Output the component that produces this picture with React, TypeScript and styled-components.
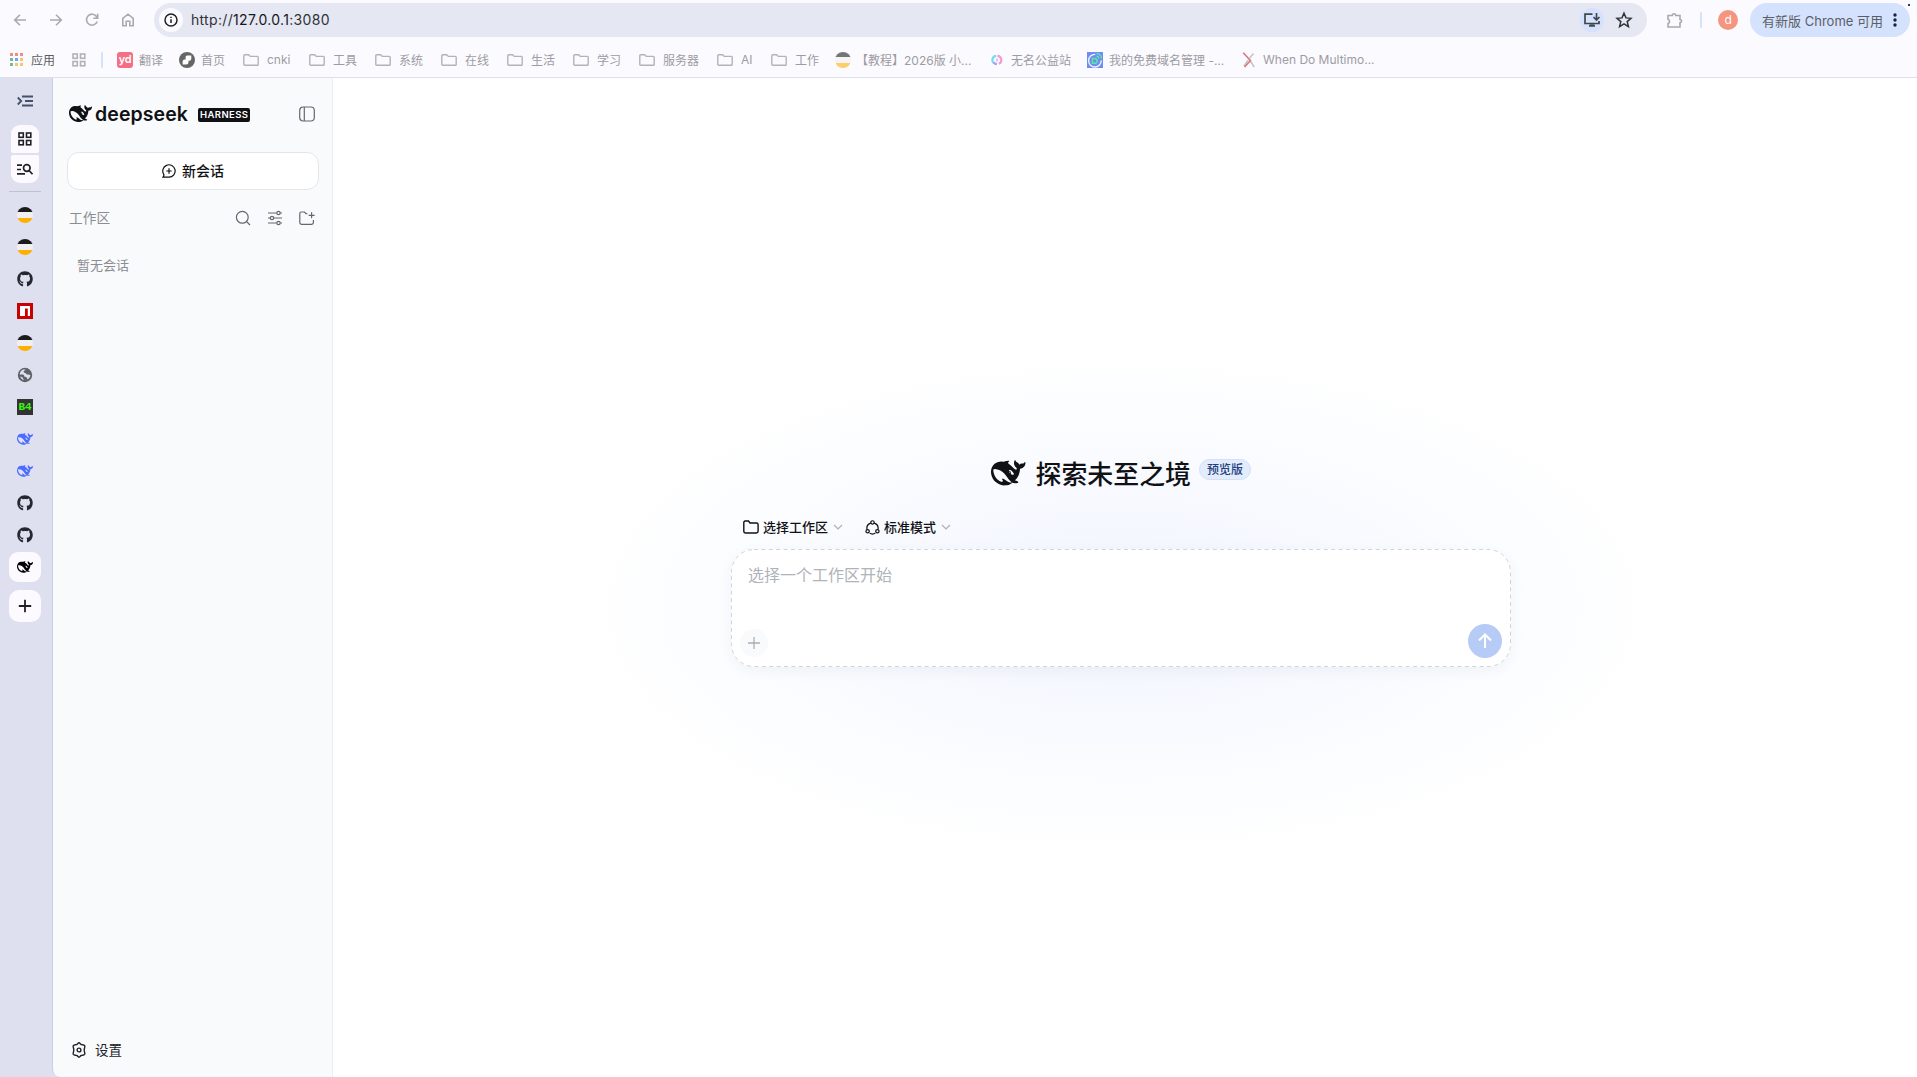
import React from "react";
import styled, { createGlobalStyle } from "styled-components";
import { FaGithub } from "react-icons/fa";

const Global = createGlobalStyle`
  * { box-sizing: border-box; }
  html, body { margin: 0; padding: 0; }
  body {
    width: 1917px; height: 1077px; overflow: hidden; background: #fff;
    font-family: Inter, "Noto Sans CJK SC", sans-serif;
    -webkit-font-smoothing: antialiased;
  }
  svg { display: block; flex: none; }
`;

const Window = styled.div`
  display: flex; flex-direction: column; width: 1917px; height: 1077px; background: #fbfaff;
`;
const Toolbar = styled.header`
  display: flex; align-items: center; height: 40px; padding: 0 7px 0 10px; color: #a9a9af; position: relative;
`;
const NavButton = styled.span<{ $w: number }>`
  display: flex; align-items: center; justify-content: center; width: ${p => p.$w}px; height: 34px;
`;
const AddressBar = styled.div`
  display: flex; align-items: center; width: 1494px; height: 34px; padding: 0 14px 0 5px;
  border-radius: 17px; background: #e5e7f3; color: #303238; font-size: 14px;
`;
const SiteInfo = styled.span`
  display: flex; align-items: center; justify-content: center; width: 24px; height: 24px;
  margin-right: 8px; border-radius: 50%; background: #fbfaff; color: #1f2126;
`;
const Url = styled.span`
  flex: none; padding-bottom: 1px; letter-spacing: 0.33px; white-space: nowrap;
  b { font-weight: 400; color: #17181c; }
`;
const Spacer = styled.span`flex: 1;`;
const InstallButton = styled.span`
  display: flex; align-items: center; justify-content: center; width: 24px; height: 24px;
  border-radius: 50%; background: #d5e2fd; color: #42454c; margin-right: 11px;
`;
const Divider = styled.i<{ $m: string }>`
  width: 2px; height: 16px; margin: ${p => p.$m}; background: #d5e2fd; border-radius: 1px;
`;
const Avatar = styled.span`
  width: 20px; height: 20px; margin-right: 12px; border-radius: 50%; background: #f5957f;
  color: #fff; font-size: 12px; line-height: 20px; text-align: center;
`;
const UpdatePill = styled.span`
  display: flex; align-items: center; width: 160px; height: 34px; padding-left: 12px; border-radius: 17px;
  background: #d5e2fd; color: #5b5e66; font-size: 13px; white-space: nowrap;
  svg { margin-left: 9px; color: #15253f; }
`;
const CornerDot = styled.i`
  position: absolute; right: 7px; top: 4px; width: 2px; height: 2px; background: #3d2a80;
`;
const Bookmarks = styled.nav`
  height: 38px; border-bottom: 1px solid #dedfea; padding: 2px 0 0 10px;
  display: flex; align-items: center; flex: none; color: #9d9ca2;
`;
const Bookmark = styled.span<{ $w: number; $gap?: number; $c?: string }>`
  display: flex; align-items: center; flex: none; width: ${p => p.$w}px; gap: ${p => p.$gap ?? 7}px;
  font-size: 12px; white-space: nowrap; color: ${p => p.$c ?? "#9d9ca2"};
`;
const YdIcon = styled.span`
  width: 16px; height: 16px; border-radius: 3px; background: #f66e84; color: #fff; flex: none;
  font-size: 11px; font-weight: 600; line-height: 14px; text-align: center; letter-spacing: -.3px;
`;
const Bee = styled.i<{ $dim?: boolean }>`
  width: 16px; height: 16px; border-radius: 50%; flex: none; opacity: ${p => (p.$dim ? 0.6 : 1)};
  background: linear-gradient(#1b1b1e 0 4.6px, #f0f0f0 4.6px 11px, #ffb003 11px);
`;
const Body = styled.div`
  display: flex; flex: 1; min-height: 0; background: #dee0f0;
`;
const TabStrip = styled.aside`
  width: 52px; flex: none; display: flex; flex-direction: column; align-items: center; padding-right: 2px;
  background: #dee0f0; color: #1f2126;
`;
const StripToggle = styled.span`
  display: flex; align-items: center; height: 18px; margin-top: 14px; color: #45506b;
`;
const StripButton = styled.span<{ $pos: "top" | "bottom" }>`
  display: flex; align-items: center; justify-content: center; width: 28px; height: 28px; background: #fcfaff;
  margin-top: ${p => (p.$pos === "top" ? 15 : 2)}px;
  border-radius: ${p => (p.$pos === "top" ? "9px 9px 2px 2px" : "2px 2px 9px 9px")};
`;
const StripRule = styled.i`
  width: 32px; height: 1px; margin: 8px 0; background: #bfc1d0;
`;
const Tab = styled.span<{ $active?: boolean }>`
  display: flex; align-items: center; justify-content: center; width: 32px; height: 30px; margin-bottom: 2px;
  border-radius: 9px; background: ${p => (p.$active ? "#fcfaff" : "transparent")};
`;
const NewTab = styled.span`
  display: flex; align-items: center; justify-content: center; width: 32px; height: 32px; margin-top: 6px;
  border-radius: 10px; background: #fcfaff;
`;
const B4 = styled.span`
  width: 16px; height: 16px; background: #333; color: #3df50f; text-align: center;
  font: bold 11px/17px "Liberation Mono", monospace;
`;
const Sidebar = styled.section`
  width: 281px; flex: none; display: flex; flex-direction: column; padding: 0 13px 0 14px;
  background: #f9fafc; border-left: 1px solid #cccfe0; border-right: 1px solid #eceef0; border-bottom-left-radius: 8px;
`;
const Brand = styled.div`
  display: flex; align-items: center; height: 28px; margin-top: 22px; padding: 0 4px 0 2px; color: #101114;
`;
const Wordmark = styled.span`
  width: 97px; margin: -1px 6px 0 3px; font: 600 19.5px/28px Inter, sans-serif; letter-spacing: .1px;
`;
const Harness = styled.span`
  width: 52px; height: 14px; margin-top: 1px; border-radius: 2px; background: #101114; color: #fff; text-align: center;
  font: 600 9.5px/14px Inter, sans-serif; letter-spacing: .4px; padding-left: .4px;
`;
const NewSession = styled.button`
  display: flex; align-items: center; justify-content: center; gap: 6px; height: 38px; margin: 24px 0 0; padding: 0;
  border: 1px solid #e5e6e9; border-radius: 12px; background: #fff; color: #101114;
  font: 500 14px/20px Inter, "Noto Sans CJK SC", sans-serif;
`;
const SectionHead = styled.div`
  display: flex; align-items: center; height: 20px; margin-top: 18px; padding: 0 4px 0 2px; gap: 16px;
  color: #8b8d93; font-size: 13.7px;
  svg { color: #64676e; }
`;
const Label = styled.span`padding-bottom: 2px;`;
const Empty = styled.p`
  margin: 27px 0 0 10px; color: #8b8d93; font-size: 13px; line-height: 20px;
`;
const Settings = styled.div`
  display: flex; align-items: center; gap: 8px; height: 20px; margin: auto 0 17px 4px; color: #202227; font-size: 13.5px;
`;
const Main = styled.main`
  display: flex; flex-direction: column; align-items: center; flex: 1; padding: 373px 8px 0 0;
  background: radial-gradient(ellipse 560px 260px at 788px 527px, #f2f6ff 0%, #f4f7fe 25%, #f8faff 50%, #fcfdff 75%, #fff 100%) #fff;
`;
const Hero = styled.div`
  display: flex; align-items: center; height: 44px; color: #101114;
`;
const Title = styled.h1`
  margin: 0 8px 0 10px; font: 500 25.9px/42px "Noto Sans CJK SC", sans-serif; padding-bottom: 1px;
`;
const Preview = styled.span`
  height: 21px; width: 52px; margin-bottom: 7px; border: 1px solid #d3e0f8; border-radius: 11px; background: #e3ecfc;
  color: #243f7d; font: 500 12px/18px "Noto Sans CJK SC", sans-serif; text-align: center;
`;
const Composer = styled.div`
  display: flex; flex-direction: column; width: 780px;
`;
const Selectors = styled.div`
  display: flex; height: 32px; padding-left: 12px; gap: 22px; margin: 16px 0 6px;
`;
const Selector = styled.span`
  display: flex; align-items: center; gap: 4px; color: #101114; font-size: 13px; font-weight: 500;
  svg:last-child { color: #aeb0b5; margin-left: 1px; }
`;
const InputBox = styled.div`
  position: relative; display: flex; flex-direction: column; justify-content: space-between; height: 118px;
  padding: 15px 9px 9px 10px; border-radius: 23px; background: #fff;
  box-shadow: 0 4px 14px rgba(40, 50, 80, .05);
`;
const DashedEdge = styled.svg`
  position: absolute; inset: 0; width: 100%; height: 100%; pointer-events: none;
`;
const Placeholder = styled.span`
  padding-left: 7px; color: #b0b3ba; font-size: 16px; line-height: 22px;
`;
const InputActions = styled.div`
  display: flex; justify-content: space-between; align-items: center;
`;
const Attach = styled.span`
  display: flex; align-items: center; justify-content: center; width: 28px; height: 28px; margin-top: 4px; margin-left: -1px;
  border-radius: 50%; background: #f9fafb; color: #adafb3;
`;
const Send = styled.span`
  display: flex; align-items: center; justify-content: center; width: 34px; height: 34px;
  border-radius: 50%; background: #b7cbf7; color: #fff;
`;

const Icon = ({ s = 16, w = 1.3, children, box = 16 }: { s?: number; w?: number; box?: number; children: React.ReactNode }) => (
  <svg width={s} height={s} viewBox={`0 0 ${box} ${box}`} fill="none" stroke="currentColor" strokeWidth={w}>{children}</svg>
);

const Whale = ({ s, c = "currentColor" }: { s: number; c?: string }) => (
  <svg width={s} height={s * 0.75} viewBox="0 3 24 18" fill={c}>
    <path d="M23.748 4.482c-.254-.124-.364.113-.512.234-.051.039-.094.09-.137.136-.372.397-.806.657-1.373.626-.829-.046-1.537.214-2.163.848-.133-.782-.575-1.248-1.247-1.548-.352-.156-.708-.311-.955-.65-.172-.241-.219-.51-.305-.774-.055-.16-.11-.323-.293-.35-.2-.031-.278.136-.356.276-.313.572-.434 1.202-.422 1.84.027 1.436.633 2.58 1.838 3.393.137.093.172.187.129.323-.082.28-.18.552-.266.833-.055.179-.137.217-.329.14a5.526 5.526 0 01-1.736-1.18c-.857-.828-1.631-1.742-2.597-2.458a11.365 11.365 0 00-.689-.471c-.985-.957.13-1.743.388-1.836.27-.098.093-.432-.779-.428-.872.004-1.67.295-2.687.684a3.055 3.055 0 01-.465.137 9.597 9.597 0 00-2.883-.102c-1.885.21-3.39 1.102-4.497 2.623C.082 8.606-.231 10.684.152 12.85c.403 2.284 1.569 4.175 3.36 5.653 1.858 1.533 3.997 2.284 6.438 2.14 1.482-.085 3.133-.284 4.994-1.86.47.234.962.327 1.78.397.63.059 1.236-.03 1.705-.128.735-.156.684-.837.419-.961-2.155-1.004-1.682-.595-2.113-.926 1.096-1.296 2.746-2.642 3.392-7.003.05-.347.007-.565 0-.845-.004-.17.035-.237.23-.256a4.173 4.173 0 001.545-.475c1.396-.763 1.96-2.015 2.093-3.517.02-.23-.004-.467-.247-.588zM11.581 18c-2.089-1.642-3.102-2.183-3.52-2.16-.392.024-.321.471-.235.763.09.288.207.486.371.739.114.167.192.416-.113.603-.673.416-1.842-.14-1.897-.167-1.361-.802-2.5-1.86-3.301-3.307-.774-1.393-1.224-2.887-1.298-4.482-.02-.386.093-.522.477-.592a4.696 4.696 0 011.529-.039c2.132.312 3.946 1.265 5.468 2.774.868.86 1.525 1.887 2.202 2.891.72 1.066 1.494 2.082 2.48 2.914.348.292.625.514.891.677-.802.09-2.14.11-3.054-.614zm1-6.44a.306.306 0 01.415-.287.302.302 0 01.2.288.306.306 0 01-.31.307.303.303 0 01-.304-.308zm3.11 1.596c-.2.081-.399.151-.59.16a1.245 1.245 0 01-.798-.254c-.274-.23-.47-.358-.552-.758a1.73 1.73 0 01.016-.588c.07-.327-.008-.537-.239-.727-.187-.156-.426-.199-.688-.199a.559.559 0 01-.254-.078c-.11-.054-.2-.19-.114-.358.028-.054.16-.186.192-.21.356-.202.767-.136 1.146.016.352.144.618.408 1.001.782.391.451.462.576.685.914.176.265.336.537.445.848.067.195-.019.354-.25.452z" />
  </svg>
);

const FolderOutline = () => (
  <svg width="16" height="12" viewBox="0 0 16 12" fill="none" stroke="#b3b2b8" strokeWidth="1.4">
    <path d="M.8 1.6a.9.9 0 0 1 .9-.9h4l1.6 1.7h7a.9.9 0 0 1 .9.9v7.1a.9.9 0 0 1-.9.9H1.7a.9.9 0 0 1-.9-.9z" />
  </svg>
);
const GridFour = ({ s = 14, w = 1.6 }: { s?: number; w?: number }) => (
  <Icon s={s} box={14} w={w}>
    {[[1, 1], [8.5, 1], [1, 8.5], [8.5, 8.5]].map(([x, y]) => <rect key={`${x}${y}`} x={x} y={y} width="4.3" height="4.3" />)}
  </Icon>
);
const AppsDots = () => (
  <svg width="13" height="13" viewBox="0 0 13 13">
    {["#f28b82", "#f28b82", "#f28b82", "#74bd8d", "#6aa7f5", "#f7c56b", "#74bd8d", "#f7c56b", "#f7c56b"].map((c, i) => (
      <rect key={i} x={(i % 3) * 5} y={Math.floor(i / 3) * 5} width="3" height="3" fill={c} />
    ))}
  </svg>
);
const HomeMark = () => (
  <svg width="16" height="16" viewBox="0 0 16 16">
    <circle cx="8" cy="8" r="8" fill="#666" />
    <path d="M8.2 3.5h4.1v3.2a2 2 0 0 1-2 2h-.8v1.6a2.3 2.3 0 0 1-2.3 2.3H3.6V9.5a2 2 0 0 1 2-2h1V5.1a1.6 1.6 0 0 1 1.6-1.6z" fill="#fff" />
  </svg>
);
const SwirlMark = () => (
  <svg width="16" height="16" viewBox="0 0 16 16" fill="none" strokeWidth="2.2">
    <path d="M7.2 3.9A4.1 4.1 0 0 0 4.7 11" stroke="#7bd9ee" />
    <path d="M4.7 10.500a4.100 4.100 0 0 0 3.200 1.600" stroke="#a99bf8" />
    <path d="M8.4 3.900a4.100 4.100 0 0 1 1.300 7.900" stroke="#f79bce" />
    <path d="M8 6.500v3" stroke="#c0a3f5" strokeWidth="1.2" />
  </svg>
);
const DomainMark = () => (
  <svg width="16" height="16" viewBox="0 0 16 16" fill="none">
    <path d="M0 0h16v16H0z" fill="#6f8cf0" />
    <path d="M8.2 2.4a6.3 6.3 0 1 0 6 6" stroke="#edf2ff" strokeWidth="1.4" />
    <path d="M5.5 6.5h2.2a2.4 2.4 0 0 1 0 4.8H5.5z" stroke="#5be6a4" strokeWidth="1.5" />
    <path d="M9.500 1.300a6 6 0 0 1 5.200 5.200M9.500 4a3.600 3.600 0 0 1 2.700 2.700" stroke="#63e3a8" strokeWidth="1.3" />
  </svg>
);
const ArxivMark = () => (
  <svg width="16" height="16" viewBox="0 0 16 16" fill="none">
    <path d="M12.5 1.5 8.7 6M7 8.2 3 14M8 7l5.300 8" stroke="#c6c2c2" strokeWidth="1.5" />
    <path d="m2.2.8 7.200 7.700L3.600 15" stroke="#db7680" strokeWidth="1.6" />
  </svg>
);
const Globe = () => (
  <svg width="16" height="16" viewBox="0 0 16 16">
    <circle cx="8" cy="8" r="7.2" fill="#5f6368" />
    <path d="M8.6 2.6c-.4 1.2-2 .8-2 2.1 0 1.2 1.8.8 2.2 1.6.5 1 1.2 1.4 2.3 1.2.8-.2 1.6.2 2.3.4-.2 2-1.2 3.6-3 4.6-.2-1.1-.2-2-1.2-2.3-.9-.3-1.9-.1-2-1.2-.2-1-.7-1.5-1.7-1.5H2.7c0-2.4 1.4-4.4 3.5-5.1z" fill="#dee0f0" />
    <path d="M3.2 9.4c1.2.5 2.4.5 2.7 1.6.2.8.3 1.5 1.3 1.9-1.8.1-3.4-1.5-4-3.500z" fill="#dee0f0" />
  </svg>
);
const Npm = () => (
  <svg width="16" height="16" viewBox="0 0 16 16">
    <path d="M0 0h16v16H0z" fill="#cb0000" /><path d="M3 3h10v10h-2.200V5.500H8V13H3z" fill="#fff" />
  </svg>
);
const Chevron = () => <Icon s={10} box={10} w={1.200}><path d="m1 3 4 4 4-4" /></Icon>;

const folders: [string, number][] = [["cnki", 66], ["工具", 66], ["系统", 66], ["在线", 66], ["生活", 66], ["学习", 66], ["服务器", 78], ["AI", 54], ["工作", 64]];

export default function App() {
  return (
    <Window>
      <Global />
      <Toolbar>
        <NavButton $w={20}><Icon w={1.6}><path d="M14 8H3M8 2.700 2.700 8 8 13.300" /></Icon></NavButton>
        <NavButton $w={52}><Icon w={1.6}><path d="M2 8h11M8 2.700 13.300 8 8 13.300" /></Icon></NavButton>
        <NavButton $w={20}><Icon w={1.6}><path d="M13.200 9.500a5.500 5.500 0 1 1-.7-5L13.600 6M13.700 1.800V6.300H9.300" /></Icon></NavButton>
        <NavButton $w={52}><Icon w={1.6}><path d="M2.800 6.300 8 2.200l5.200 4.100v7.500H9.800V9.300H6.200v4.500H2.800z" /></Icon></NavButton>
        <AddressBar>
          <SiteInfo><Icon w={1.5}><circle cx="8" cy="8" r="6" /><path d="M8 7.200v3.800M8 4.700v1.400" /></Icon></SiteInfo>
          <Url>http://<b>127.0.0.1</b>:3080</Url>
          <Spacer />
          <InstallButton><Icon s={18} box={18} w={1.7}><path d="M9.500 3.200H2v9.300h14V10M6 15h6M6.500 14.300h5M13.500 2v6.500M10.500 6l3 3 3-3" /></Icon></InstallButton>
          <Icon s={18} box={18} w={1.5}><path d="m9 2.200 2 4.700 5 .4-3.800 3.300 1.200 5L9 12.900l-4.400 2.700 1.200-5L2 7.300l5-.4z" /></Icon>
        </AddressBar>
        <NavButton $w={53}><Icon s={18} box={18} w={1.6}><path d="M3 4.500h4.300a1.700 1.700 0 0 1 3.400 0H15v4a1.600 1.600 0 0 1 0 3.200V16H3v-3.500a2.200 2.200 0 0 0 0-4.200z" /></Icon></NavButton>
        <Divider $m="0 16px 0 0" />
        <Avatar>d</Avatar>
        <UpdatePill>有新版 Chrome 可用<svg width="6" height="14" viewBox="0 0 6 14" fill="currentColor"><circle cx="3" cy="2" r="1.700" /><circle cx="3" cy="7" r="1.700" /><circle cx="3" cy="12" r="1.700" /></svg></UpdatePill>
        <CornerDot />
      </Toolbar>
      <Bookmarks>
        <Bookmark $w={62} $gap={8} $c="#5b5c61"><AppsDots />应用</Bookmark>
        <Bookmark $w={29} $c="#b3b2b8"><GridFour /></Bookmark>
        <Divider $m="0 14px 0 0" />
        <Bookmark $w={62} $gap={6}><YdIcon>yd</YdIcon>翻译</Bookmark>
        <Bookmark $w={64} $gap={6}><HomeMark />首页</Bookmark>
        {folders.map(([name, w]) => <Bookmark key={name} $w={w} $gap={8}><FolderOutline />{name}</Bookmark>)}
        <Bookmark $w={154} $gap={5}><Bee $dim />【教程】2026版 小...</Bookmark>
        <Bookmark $w={98} $gap={6}><SwirlMark />无名公益站</Bookmark>
        <Bookmark $w={154} $gap={6}><DomainMark />我的免费域名管理 -...</Bookmark>
        <Bookmark $w={150} $gap={6}><ArxivMark />When Do Multimo...</Bookmark>
      </Bookmarks>
      <Body>
        <TabStrip>
          <StripToggle><Icon w={1.8}><path d="M5 3.500h11M8 8h8M5 12.500h11M.8 4.500 4.200 8 .8 11.500" /></Icon></StripToggle>
          <StripButton $pos="top"><GridFour /></StripButton>
          <StripButton $pos="bottom"><Icon w={1.700}><path d="M0 4.200h5M0 8.500h4M0 12.900h8" /><circle cx="9.800" cy="7" r="3.300" /><path d="m12 9.500 3.500 3.700" /></Icon></StripButton>
          <StripRule />
          <Tab><Bee /></Tab>
          <Tab><Bee /></Tab>
          <Tab><FaGithub size={16} color="#24292f" /></Tab>
          <Tab><Npm /></Tab>
          <Tab><Bee /></Tab>
          <Tab><Globe /></Tab>
          <Tab><B4>B4</B4></Tab>
          <Tab><Whale s={16} c="#4d6bfe" /></Tab>
          <Tab><Whale s={16} c="#4d6bfe" /></Tab>
          <Tab><FaGithub size={16} color="#24292f" /></Tab>
          <Tab><FaGithub size={16} color="#24292f" /></Tab>
          <Tab $active><Whale s={16} c="#000" /></Tab>
          <NewTab><Icon s={14} box={14} w={1.8}><path d="M7 .8v12.400M.8 7h12.400" /></Icon></NewTab>
        </TabStrip>
        <Sidebar>
          <Brand>
            <Whale s={23} />
            <Wordmark>deepseek</Wordmark>
            <Harness>HARNESS</Harness>
            <Spacer />
            <Icon s={16} w={1.2}><g stroke="#64676e"><rect x=".7" y="1" width="14.600" height="14" rx="3.500" /><path d="M5.300 1v14" /></g></Icon>
          </Brand>
          <NewSession>
            <Icon s={14} box={14} w={1.2}><path d="M1 13.200h6A6.200 6.200 0 1 0 1.900 10.600 3.500 3.500 0 0 1 1 13.200zM7 4.300v5.400M4.300 7h5.400" /></Icon>
            新会话
          </NewSession>
          <SectionHead>
            <Label>工作区</Label><Spacer />
            <Icon w={1.2}><circle cx="7.300" cy="7.300" r="5.900" /><path d="m11.600 11.600 3.400 3.400" /></Icon>
            <Icon w={1.200}><path d="M1 3h8.500M13.500 3H15M1 8h2M7 8h8M1 13h8.500M13.500 13H15" /><circle cx="11.500" cy="3" r="1.700" /><circle cx="5" cy="8" r="1.700" /><circle cx="11.500" cy="13" r="1.700" /></Icon>
            <Icon w={1.2}><path d="M8.300 3.700H7L5.500 2H2.200A1.400 1.400 0 0 0 .8 3.400v9.200A1.700 1.700 0 0 0 2.500 14.300h10.200a1.700 1.700 0 0 0 1.700-1.700V10M12.600 2.300v6M9.600 5.300h6" /></Icon>
          </SectionHead>
          <Empty>暂无会话</Empty>
          <Settings>
            <Icon w={1.4}><path d="M8 .8c.9 0 1.400 1.300 2.200 1.700.9.500 2.800 0 3.500 1.200.600 1.100-.5 2.300-.5 4.300s1.100 3.200.5 4.300c-.7 1.200-2.600.7-3.500 1.200-.8.4-1.300 1.700-2.200 1.700s-1.400-1.300-2.200-1.700c-.9-.5-2.800 0-3.500-1.200-.6-1.100.5-2.300.5-4.300s-1.100-3.200-.5-4.300c.7-1.200 2.600-.7 3.500-1.200C6.600 2.100 7.100.8 8 .8z" /><circle cx="8" cy="8" r="1.900" /></Icon>
            <Label>设置</Label>
          </Settings>
        </Sidebar>
        <Main>
          <Hero>
            <Whale s={34.500} />
            <Title>探索未至之境</Title>
            <Preview>预览版</Preview>
          </Hero>
          <Composer>
            <Selectors>
              <Selector><Icon w={1.4}><path d="M.8 3.300A1.300 1.300 0 0 1 2.100 2H5.500L7 4h6.500a1.600 1.600 0 0 1 1.600 1.600v6.700a1.700 1.700 0 0 1-1.700 1.700H2.500a1.700 1.700 0 0 1-1.700-1.700z" /></Icon><Label>选择工作区</Label><Chevron /></Selector>
              <Selector><Icon s={15} w={1.3}><circle cx="8" cy="2.600" r="1.800" /><circle cx="2.800" cy="12" r="1.800" /><circle cx="13.200" cy="12" r="1.800" /><path d="M6.200 3.300A6 6 0 0 0 2.100 10M9.800 3.300a6 6 0 0 1 4.100 6.700M5 14.200a6.500 6.500 0 0 0 6 0" /></Icon><Label>标准模式</Label><Chevron /></Selector>
            </Selectors>
            <InputBox>
              <DashedEdge viewBox="0 0 780 118" fill="none">
                <rect x=".5" y=".5" width="779" height="117" rx="22.500" stroke="#d3d4d7" strokeDasharray="4 3.400" />
              </DashedEdge>
              <Placeholder>选择一个工作区开始</Placeholder>
              <InputActions>
                <Attach><Icon s={12} box={12} w={1.3}><path d="M6 0v12M0 6h12" /></Icon></Attach>
                <Send><Icon s={16} w={2}><path d="M8 15V2M2 7.500l6-6 6 6" /></Icon></Send>
              </InputActions>
            </InputBox>
          </Composer>
        </Main>
      </Body>
    </Window>
  );
}
